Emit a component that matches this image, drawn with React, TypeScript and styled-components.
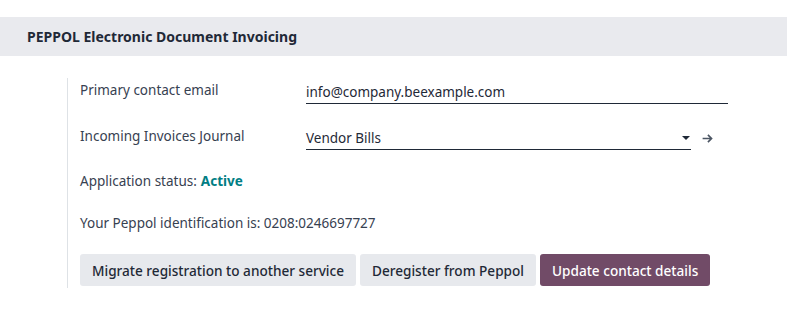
import * as React from 'react';
import styled, { createGlobalStyle } from 'styled-components';

const GlobalStyle = createGlobalStyle`
  body {
    margin: 0;
    background: #fff;
    font-family: "Noto Sans", "Open Sans", sans-serif;
    font-size: 13.5px;
    color: #374151;
  }
`;

const Page = styled.div`
  padding-top: 17px;
`;

const SectionHeader = styled.div`
  background: #e9eaee;
  height: 39px;
  display: flex;
  align-items: center;
  padding-left: 27px;
  font-weight: 700;
  font-size: 14px;
  color: #1f2937;
`;

const Body = styled.div`
  margin: 22px 0 0 67px;
  padding: 0 0 0 12px;
  border-left: 1px solid #dee2e6;
  width: 648px;
  display: flex;
  flex-direction: column;
`;

const FieldRow = styled.div`
  display: grid;
  grid-template-columns: 226px 1fr;
  align-items: start;
  height: 46px;
`;

const Label = styled.div`
  padding-top: 3px;
  color: #374151;
`;

const InputLine = styled.div<{ $width?: number }>`
  display: flex;
  align-items: center;
  height: 23px;
  border-bottom: 1px solid #1f2937;
  width: ${p => (p.$width ? `${p.$width}px` : '100%')};
  color: #1f2937;
  padding-top: 2px;
`;

const SelectWrap = styled.div`
  display: flex;
  align-items: center;
`;

const Caret = styled.span`
  margin-left: auto;
  margin-right: 1px;
  width: 0;
  height: 0;
  border-left: 4px solid transparent;
  border-right: 4px solid transparent;
  border-top: 4px solid #1f2937;
`;

const ArrowButton = styled.span`
  display: inline-flex;
  margin-left: 10px;
  color: #4b5563;
  margin-top: 2px;
`;

const TextLine = styled.div<{ $height: number }>`
  height: ${p => p.$height}px;
  display: flex;
  align-items: flex-start;
  padding-top: 2px;
`;

const Status = styled.span`
  color: #017e84;
  font-weight: 700;
  margin-left: 4px;
`;

const ButtonRow = styled.div`
  display: flex;
  gap: 4px;
  padding-bottom: 2px;
`;

const Button = styled.button<{ $primary?: boolean }>`
  font-family: inherit;
  font-size: 13.6px;
  font-weight: 500;
  border: none;
  border-radius: 3px;
  height: 32px;
  padding: 0 12px;
  cursor: pointer;
  background: ${p => (p.$primary ? '#714b67' : '#e7e9ed')};
  color: ${p => (p.$primary ? '#ffffff' : '#1f2937')};
`;

export default function App() {
  return (
    <Page>
      <GlobalStyle />
      <SectionHeader>PEPPOL Electronic Document Invoicing</SectionHeader>
      <Body>
        <FieldRow>
          <Label>Primary contact email</Label>
          <InputLine>info@company.beexample.com</InputLine>
        </FieldRow>
        <FieldRow>
          <Label>Incoming Invoices Journal</Label>
          <SelectWrap>
            <InputLine $width={385}>
              Vendor Bills
              <Caret />
            </InputLine>
            <ArrowButton>
              <svg width="13" height="13" viewBox="0 0 16 16" fill="none" stroke="currentColor" strokeWidth="2">
                <path d="M2 8h11M8.5 3.5 13 8l-4.5 4.5" />
              </svg>
            </ArrowButton>
          </SelectWrap>
        </FieldRow>
        <TextLine $height={40}>
          Application status:<Status>Active</Status>
        </TextLine>
        <TextLine $height={40}>Your Peppol identification is: 0208:0246697727</TextLine>
        <ButtonRow>
          <Button>Migrate registration to another service</Button>
          <Button>Deregister from Peppol</Button>
          <Button $primary>Update contact details</Button>
        </ButtonRow>
      </Body>
    </Page>
  );
}
